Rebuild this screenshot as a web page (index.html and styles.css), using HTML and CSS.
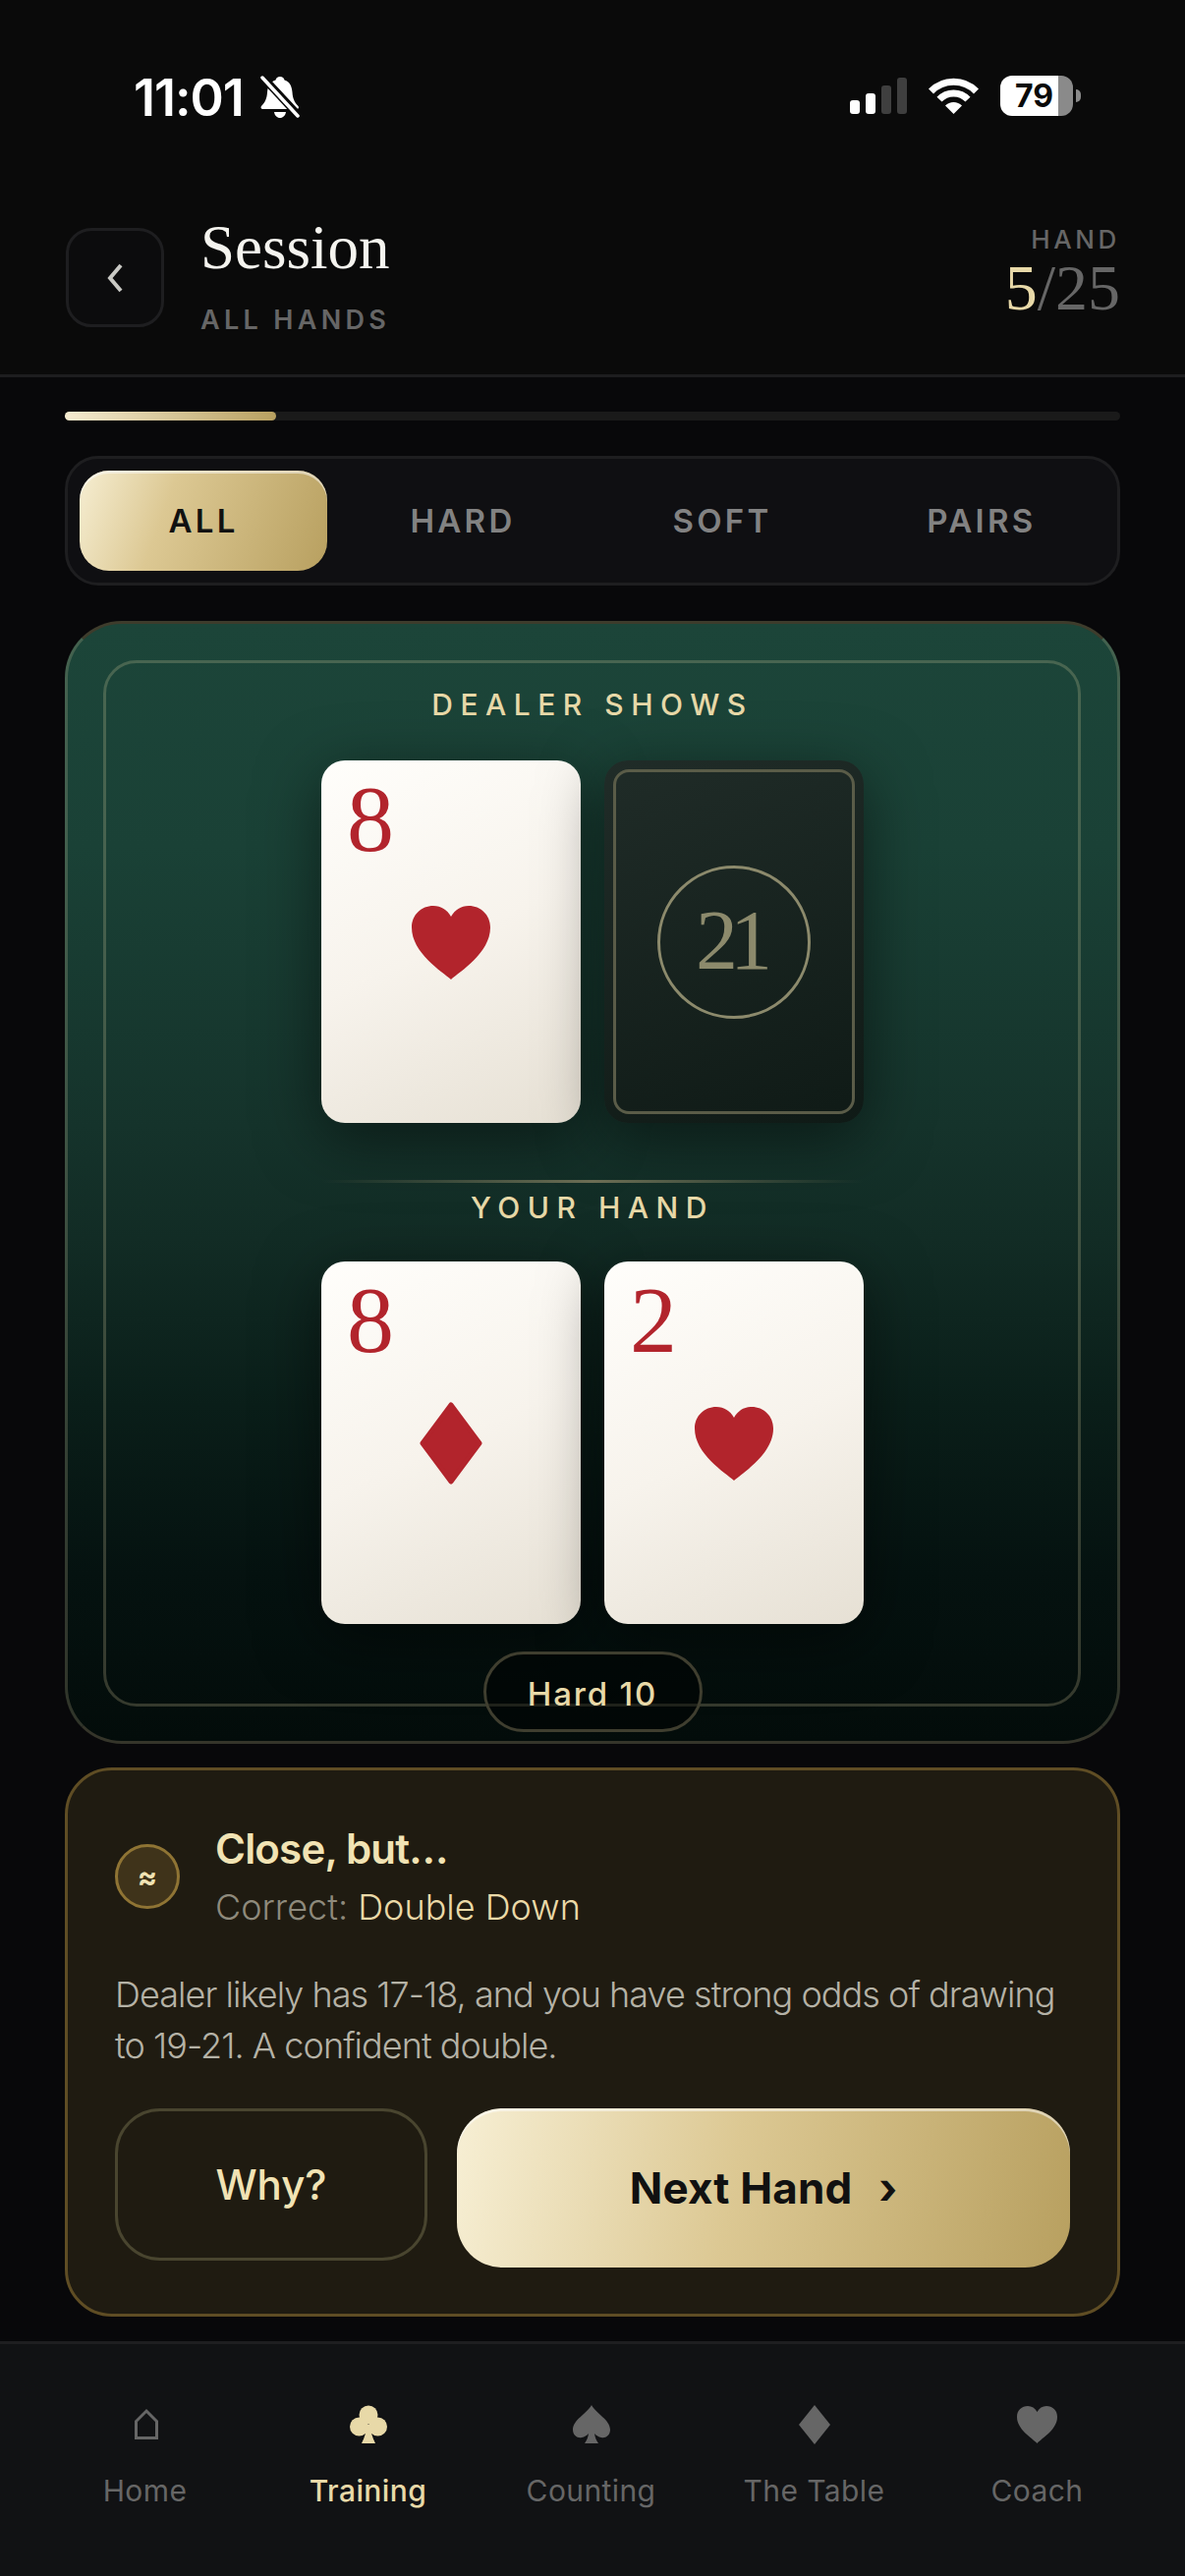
FILE: index.html
```html
<!DOCTYPE html>
<html lang="en">
<head>
  <meta charset="UTF-8">
  <meta name="viewport" content="width=device-width, initial-scale=1.0">
  <title>Session</title>
  <link rel="stylesheet" href="styles.css">
</head>
<body>
  <div class="status">
    <div class="status-left">
      <span class="clock">11:01</span>
      <svg class="bell" viewBox="0 0 40 44" width="40" height="44">
        <path d="M20 1c2.500 0 4 1.500 4.500 3.500C30 6 32 11 32.500 17c.4 6 2 10 6 14 1 1.200.4 3-1.500 3H2.500C.6 34 0 32.200 1 31c4-4 5.600-8 6-14C7.500 11 10 6 15.500 4.500 16 2.500 17.500 1 20 1zM14 37h12c-.5 3.500-3 6-6 6s-5.500-2.500-6-6z" fill="#fff"/>
        <path d="M1 0 L40 42" stroke="#0a0a0a" stroke-width="8"/>
        <path d="M2 2 L38 41" stroke="#fff" stroke-width="3.500" stroke-linecap="round"/>
      </svg>
    </div>
    <div class="status-right">
      <div class="signal">
        <span class="bar bar-1"></span>
        <span class="bar bar-2"></span>
        <span class="bar bar-3"></span>
        <span class="bar bar-4"></span>
      </div>
      <svg class="wifi" viewBox="0 0 51 37" width="51" height="37">
        <path d="M2.500 14A32 32 0 0 1 48.500 14" fill="none" stroke="#fff" stroke-width="7"/>
        <path d="M11 22.200A20 20 0 0 1 40 22.200" fill="none" stroke="#fff" stroke-width="7"/>
        <path d="M25.500 37L17 28.500A12 12 0 0 1 34 28.500Z" fill="#fff"/>
      </svg>
      <div class="battery">
        <div class="battery-body"><span>79</span></div>
        <span class="battery-nub"></span>
      </div>
    </div>
  </div>

  <div class="header">
    <button class="back">
      <svg viewBox="0 0 20 32" width="20" height="32">
        <path d="M16 3L5 16L16 29" fill="none" stroke="#c9c9c4" stroke-width="4"/>
      </svg>
    </button>
    <div class="title">
      <h1>Session</h1>
      <div class="subtitle">ALL HANDS</div>
    </div>
    <div class="counter">
      <div class="counter-label">HAND</div>
      <div class="counter-value"><span class="now">5</span>/25</div>
    </div>
  </div>

  <div class="main">
    <div class="progress"><div class="progress-fill"></div></div>

    <div class="tabs">
      <a class="tab active" href="#">ALL</a>
      <a class="tab" href="#">HARD</a>
      <a class="tab" href="#">SOFT</a>
      <a class="tab" href="#">PAIRS</a>
    </div>

    <div class="table">
      <div class="table-frame"></div>
      <div class="table-label">DEALER SHOWS</div>
      <div class="hand dealer-hand">
        <div class="card">
          <span class="rank">8</span>
          <svg class="suit suit-heart" viewBox="0 0 80 75" width="80" height="75">
            <path d="M40 75C31 67 0 48 0 22C0 9 10 0 22 0C30 0 36 4 40 11C44 4 50 0 58 0C70 0 80 9 80 22C80 48 49 67 40 75Z"/>
          </svg>
        </div>
        <div class="card-back">
          <div class="back-frame">
            <div class="back-circle">21</div>
          </div>
        </div>
      </div>

      <div class="divider"></div>
      <div class="table-label">YOUR HAND</div>
      <div class="hand your-hand">
        <div class="card">
          <span class="rank">8</span>
          <svg class="suit" viewBox="0 0 64 84" width="64" height="84">
            <path d="M32 3L61 42L32 81L3 42Z" stroke="#b2242c" stroke-width="5" stroke-linejoin="round"/>
          </svg>
        </div>
        <div class="card">
          <span class="rank">2</span>
          <svg class="suit suit-heart" viewBox="0 0 80 75" width="80" height="75">
            <path d="M40 75C31 67 0 48 0 22C0 9 10 0 22 0C30 0 36 4 40 11C44 4 50 0 58 0C70 0 80 9 80 22C80 48 49 67 40 75Z"/>
          </svg>
        </div>
      </div>
      <div class="pill">Hard 10</div>
    </div>

    <div class="feedback">
      <div class="verdict">
        <div class="verdict-icon">≈</div>
        <div>
          <div class="verdict-title">Close, but…</div>
          <div class="verdict-sub">Correct: <span>Double Down</span></div>
        </div>
      </div>
      <p class="explain">Dealer likely has 17-18, and you have strong odds of drawing to 19-21. A confident double.</p>
      <div class="actions">
        <button class="why">Why?</button>
        <button class="next">Next Hand <span class="next-arrow">›</span></button>
      </div>
    </div>
  </div>

  <div class="nav">
    <a class="nav-item" href="#">
      <svg viewBox="0 0 38 40" width="38" height="40">
        <path d="M20 6L30.500 16.500V33.500H9.500V16.500Z" fill="none" stroke="#666" stroke-width="3"/>
      </svg>
      <span>Home</span>
    </a>
    <a class="nav-item active" href="#">
      <svg viewBox="0 0 38 40" width="38" height="40">
        <circle cx="19" cy="10" r="9.500"/>
        <circle cx="9.500" cy="22" r="9.500"/>
        <circle cx="28.500" cy="22" r="9.500"/>
        <path d="M17 20h4c0 7 2 13 5 19H12c3-6 5-12 5-19z"/>
      </svg>
      <span>Training</span>
    </a>
    <a class="nav-item" href="#">
      <svg viewBox="0 0 38 40" width="38" height="40">
        <path d="M19 0C24 9 38 15 38 25C38 31 33 34 29 33C26 32.500 24 31 22 29C22.500 33 24 36 26 39H12C14 36 15.500 33 16 29C14 31 12 32.500 9 33C5 34 0 31 0 25C0 15 14 9 19 0Z"/>
      </svg>
      <span>Counting</span>
    </a>
    <a class="nav-item" href="#">
      <svg viewBox="0 0 38 40" width="38" height="40">
        <path d="M19 0L35 20L19 40L3 20Z"/>
      </svg>
      <span>The Table</span>
    </a>
    <a class="nav-item" href="#">
      <svg viewBox="0 0 41 38" width="41" height="38">
        <path d="M20.500 38C15 32 0 24 0 11C0 4 5 0 11 0C15 0 18.500 2 20.500 6C22.500 2 26 0 30 0C36 0 41 4 41 11C41 24 26 32 20.500 38Z"/>
      </svg>
      <span>Coach</span>
    </a>
  </div>
</body>
</html>
```

FILE: styles.css
```css
* {
  box-sizing: border-box;
}

body {
  margin: 0;
  width: 1206px;
  height: 2622px;
  display: flex;
  flex-direction: column;
  overflow: hidden;
  font-family: 'Inter', sans-serif;
  background-color: #08080a;
  color: #fff;
}

a {
  text-decoration: none;
}

button {
  font-family: inherit;
  cursor: pointer;
}

/* status bar */
.status {
  height: 190px;
  padding: 77px 106px 0 136px;
  display: flex;
  justify-content: space-between;
  align-items: flex-start;
  background: #0a0a0a;
}

.status-left {
  display: flex;
  align-items: center;
  gap: 17px;
}

.clock {
  font-size: 52px;
  font-weight: 600;
  line-height: 43px;
  letter-spacing: -1px;
}

.status-right {
  display: flex;
  align-items: flex-start;
}

.signal {
  display: flex;
  align-items: flex-end;
  gap: 6px;
  height: 37px;
  margin-top: 2px;
  margin-right: 22px;
}

.bar {
  width: 10px;
  border-radius: 3px;
  background: #fff;
}

.bar-1 { height: 14px; }
.bar-2 { height: 21px; }
.bar-3 { height: 29px; background: #3f3f3f; }
.bar-4 { height: 37px; background: #3f3f3f; }

.wifi {
  margin-top: 2px;
  margin-right: 22px;
}

.battery {
  display: flex;
  align-items: center;
  gap: 3px;
}

.battery-body {
  width: 74px;
  height: 41px;
  border-radius: 12px;
  background: linear-gradient(90deg, #fff 80%, #8a8a8a 80%);
  color: #0a0a0a;
  font-size: 32px;
  font-weight: 700;
  line-height: 41px;
  padding-left: 15px;
}

.battery-nub {
  width: 5px;
  height: 13px;
  border-radius: 0 6px 6px 0;
  background: #8a8a8a;
}

/* header */
.header {
  height: 194px;
  padding: 27px 66px 0 67px;
  display: flex;
  align-items: flex-start;
  border-bottom: 3px solid #1d1d1f;
  background: #0a0a0a;
}

.back {
  width: 100px;
  height: 101px;
  margin-top: 15px;
  margin-right: 37px;
  display: flex;
  align-items: center;
  justify-content: center;
  border: 3px solid #1e1e20;
  border-radius: 26px;
  background: #0c0c0d;
}

.title h1 {
  margin: 0;
  font-family: 'Liberation Serif', serif;
  font-size: 63px;
  font-weight: 400;
  line-height: 70px;
  color: #f5f4ef;
}

.subtitle {
  margin-top: 22px;
  font-size: 27px;
  font-weight: 600;
  line-height: 34px;
  letter-spacing: 0.16em;
  color: #666;
}

.counter {
  margin-left: auto;
  text-align: right;
}

.counter-label {
  margin-top: 13px;
  font-size: 26px;
  font-weight: 500;
  line-height: 28px;
  letter-spacing: 0.14em;
  color: #666;
}

.counter-value {
  margin-top: -1px;
  font-family: 'Liberation Serif', serif;
  font-size: 66px;
  line-height: 72px;
  color: #666;
}

.now {
  color: #e8d9a8;
}

/* main */
.main {
  flex: 1;
  padding: 0 66px;
  display: flex;
  flex-direction: column;
}

.progress {
  height: 9px;
  margin-top: 35px;
  border-radius: 5px;
  background: #1a1a1a;
}

.progress-fill {
  width: 20%;
  height: 100%;
  border-radius: 5px;
  background: linear-gradient(90deg, #f5ecd0, #b8a060);
}

.tabs {
  height: 132px;
  margin-top: 36px;
  padding: 12px;
  display: grid;
  grid-template-columns: repeat(4, 1fr);
  gap: 12px;
  border: 3px solid #1e1e20;
  border-radius: 34px;
  background: #0f0f12;
}

.tab {
  display: flex;
  align-items: center;
  justify-content: center;
  border-radius: 30px;
  font-size: 33px;
  font-weight: 600;
  letter-spacing: 0.1em;
  color: #828282;
}

.tab.active {
  background: linear-gradient(110deg, #f6eed2 0%, #dcc893 35%, #b8a060 100%);
  box-shadow: inset 0 3px 0 rgba(255, 255, 255, 0.5);
  color: #111;
}

/* blackjack table */
.table {
  position: relative;
  height: 1143px;
  margin-top: 36px;
  padding-top: 64px;
  display: flex;
  flex-direction: column;
  align-items: center;
  border: 3px solid rgba(232, 217, 168, 0.2);
  border-top-color: #3e3c2c;
  border-bottom-color: #35352a;
  border-radius: 58px;
  background: linear-gradient(180deg, #1c4539 0%, #1a4136 20%, #15332b 45%, #122c25 55%, #0a1e19 70%, #051210 85%, #030c0a 100%);
}

.table-frame {
  position: absolute;
  inset: 37px 37px 35px 36px;
  border: 3px solid rgba(232, 217, 168, 0.22);
  border-radius: 34px;
}

.table-label {
  position: relative;
  height: 36px;
  font-size: 30px;
  font-weight: 500;
  line-height: 36px;
  letter-spacing: 0.25em;
  color: #e8d9a8;
}

.hand {
  position: relative;
  display: flex;
  gap: 24px;
}

.dealer-hand {
  margin-top: 39px;
}

.your-hand {
  margin-top: 37px;
}

.card,
.card-back {
  width: 264px;
  height: 369px;
  border-radius: 24px;
  box-shadow: 0 16px 64px rgba(0, 0, 0, 0.5);
}

.card {
  display: grid;
  background: linear-gradient(155deg, #fffefb 0%, #f7f3ec 50%, #e6e0d4 100%);
}

.rank {
  grid-area: 1 / 1;
  padding: 10px 0 0 26px;
  font-family: 'Liberation Serif', serif;
  font-size: 96px;
  line-height: 100px;
  color: #b2242c;
}

.suit {
  grid-area: 1 / 1;
  place-self: center;
  fill: #b2242c;
}

.suit-heart {
  margin-top: 2px;
}

.card-back {
  padding: 9px;
  background: linear-gradient(160deg, #202c28 0%, #0f1a16 100%);
}

.back-frame {
  height: 100%;
  display: flex;
  align-items: center;
  justify-content: center;
  border: 3px solid #5a5c48;
  border-radius: 16px;
}

.back-circle {
  width: 156px;
  height: 156px;
  padding: 0 8px 3px 0;
  display: flex;
  align-items: center;
  justify-content: center;
  border: 3px solid #8c8a6c;
  border-radius: 50%;
  font-family: 'Liberation Serif', serif;
  font-size: 86px;
  letter-spacing: -8px;
  color: #8c8a6c;
}

.divider {
  position: relative;
  width: 552px;
  height: 3px;
  margin-top: 58px;
  margin-bottom: 7px;
  background: linear-gradient(90deg, transparent, #6c6e54 50%, transparent);
}

.pill {
  position: relative;
  width: 223px;
  height: 82px;
  margin-top: 28px;
  display: flex;
  align-items: center;
  justify-content: center;
  padding-top: 3px;
  border: 3px solid #3f3e2f;
  border-radius: 41px;
  background: rgba(0, 0, 0, 0.4);
  font-size: 33px;
  font-weight: 500;
  letter-spacing: 0.055em;
  color: #e8d9a8;
}

/* feedback panel */
.feedback {
  height: 559px;
  margin-top: 24px;
  padding: 52px 48px 0;
  border: 3px solid #5f4d24;
  border-radius: 48px;
  background: #1f1b11;
}

.verdict {
  display: flex;
  align-items: center;
  gap: 36px;
}

.verdict-icon {
  width: 66px;
  height: 66px;
  display: flex;
  align-items: center;
  justify-content: center;
  border: 3px solid #8f7434;
  border-radius: 50%;
  background: #3f331a;
  font-size: 30px;
  font-weight: 700;
  color: #f1e3b4;
}

.verdict-title {
  font-size: 42px;
  font-weight: 600;
  line-height: 56px;
  letter-spacing: -0.8px;
  color: #f1e3b4;
}

.verdict-sub {
  margin-top: 7px;
  font-size: 36px;
  font-weight: 300;
  line-height: 48px;
  color: #8e8a7c;
}

.verdict-sub span {
  color: #ead9a7;
}

.explain {
  margin: 39px 0 0;
  font-size: 36px;
  font-weight: 300;
  line-height: 52px;
  letter-spacing: -0.95px;
  color: #b5b2a6;
}

.actions {
  margin-top: 38px;
  display: flex;
  align-items: flex-start;
  gap: 30px;
}

.why {
  width: 318px;
  height: 155px;
  border: 3px solid #49452f;
  border-radius: 46px;
  background: none;
  font-size: 42px;
  font-weight: 500;
  color: #f1e3b4;
}

.next {
  width: 624px;
  height: 162px;
  border: none;
  border-radius: 46px;
  background: linear-gradient(100deg, #f7efd4 0%, #dcc893 45%, #b8a060 100%);
  box-shadow: inset 0 3px 0 rgba(255, 255, 255, 0.5);
  font-size: 44px;
  font-weight: 700;
  letter-spacing: 0.2px;
  color: #111;
}

.next-arrow {
  margin-left: 16px;
}

/* bottom nav */
.nav {
  height: 239px;
  padding: 62px 37px 0 34px;
  display: grid;
  grid-template-columns: repeat(5, 1fr);
  align-items: start;
  border-top: 3px solid #1e1e20;
  background: #111214;
}

.nav-item {
  display: flex;
  flex-direction: column;
  align-items: center;
  font-size: 30px;
  letter-spacing: 0.4px;
  color: #666;
}

.nav-item svg {
  height: 40px;
  fill: #666;
}

.nav-item span {
  margin-top: 29px;
  line-height: 36px;
}

.nav-item.active {
  font-weight: 500;
  color: #e8d9a8;
}

.nav-item.active svg {
  fill: #e8d9a8;
}
```
